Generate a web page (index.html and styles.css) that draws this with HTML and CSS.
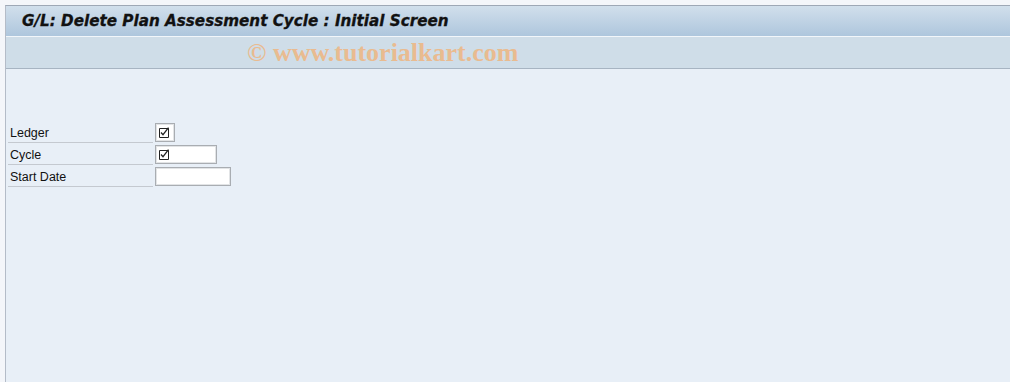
FILE: index.html
```html
<!DOCTYPE html>
<html lang="en">
<head>
    <meta charset="UTF-8">
    <meta name="viewport" content="width=device-width, initial-scale=1.0">
    <title>G/L: Delete Plan Assessment Cycle : Initial Screen</title>
    <link rel="stylesheet" href="styles.css">
</head>
<body>

<div class="window">
    <div class="titlebar">
        <h1>G/L: Delete Plan Assessment Cycle : Initial Screen</h1>
    </div>
    <div class="toolbar">
        <span class="watermark">© www.tutorialkart.com</span>
    </div>

    <div class="content">
        <div class="form">
            <div class="row">
                <label class="label">Ledger</label>
                <span class="field check-field">
                    <svg class="tick" width="13" height="13" viewBox="0 0 13 13">
                        <path d="M1.5 2.5h9v9h-9z" fill="none" stroke="#222" stroke-width="1"/>
                        <path d="M3 6.5l2 2.2 5.5-7" fill="none" stroke="#222" stroke-width="1.3"/>
                    </svg>
                </span>
            </div>
            <div class="row">
                <label class="label">Cycle</label>
                <span class="field cycle-field">
                    <svg class="tick" width="13" height="13" viewBox="0 0 13 13">
                        <path d="M1.5 2.5h9v9h-9z" fill="none" stroke="#222" stroke-width="1"/>
                        <path d="M3 6.5l2 2.2 5.5-7" fill="none" stroke="#222" stroke-width="1.3"/>
                    </svg>
                </span>
            </div>
            <div class="row">
                <label class="label">Start Date</label>
                <span class="field date-field"></span>
            </div>
        </div>
    </div>
</div>

</body>
</html>
```

FILE: styles.css
```css
body {
    margin: 0;
    padding: 0;
    background-color: #f4f6fa;
    font-family: "Liberation Sans", Arial, sans-serif;
}
.window {
    margin: 5px 0 0 5px;
    border-top: 1px solid #9ea8b6;
    border-left: 1px solid #b4bcc8;
    height: 376px;
    display: flex;
    flex-direction: column;
}
.titlebar {
    height: 30px;
    background: linear-gradient(#d1dfec, #aec6dd);
    padding-left: 16px;
    display: flex;
    align-items: center;
}
.titlebar h1 {
    margin: 0;
    font-family: "DejaVu Sans", Verdana, sans-serif;
    font-size: 15.2px;
    font-weight: bold;
    font-style: italic;
    color: #111;
    -webkit-text-stroke: 0.3px #111;
}
.toolbar {
    height: 31px;
    border-top: 1px solid #f2f6fa;
    border-bottom: 1px solid #a7b4c2;
    background-color: #cfdde8;
    display: flex;
    align-items: center;
    padding-left: 241px;
}
.watermark {
    font-family: "Liberation Serif", "Times New Roman", serif;
    font-weight: bold;
    font-size: 26px;
    color: #e9bb90;
}
.content {
    flex: 1;
    background-color: #e8eff7;
    padding: 52px 0 0 2px;
}
.row {
    display: flex;
    align-items: center;
    height: 22px;
}
.label {
    width: 143px;
    height: 21px;
    line-height: 24px;
    padding-left: 2px;
    font-size: 12.5px;
    color: #111;
    border-bottom: 1px solid #c4c9d0;
}
.field {
    margin-left: 2px;
    height: 17px;
    background-color: #fff;
    border: 1px solid #a9adb2;
    box-shadow: inset 0 0 0 1px #e2e4e6;
    display: flex;
    align-items: center;
    padding-left: 2px;
}
.check-field {
    width: 16px;
}
.cycle-field {
    width: 58px;
}
.date-field {
    width: 72px;
}
.tick {
    display: block;
}
```
